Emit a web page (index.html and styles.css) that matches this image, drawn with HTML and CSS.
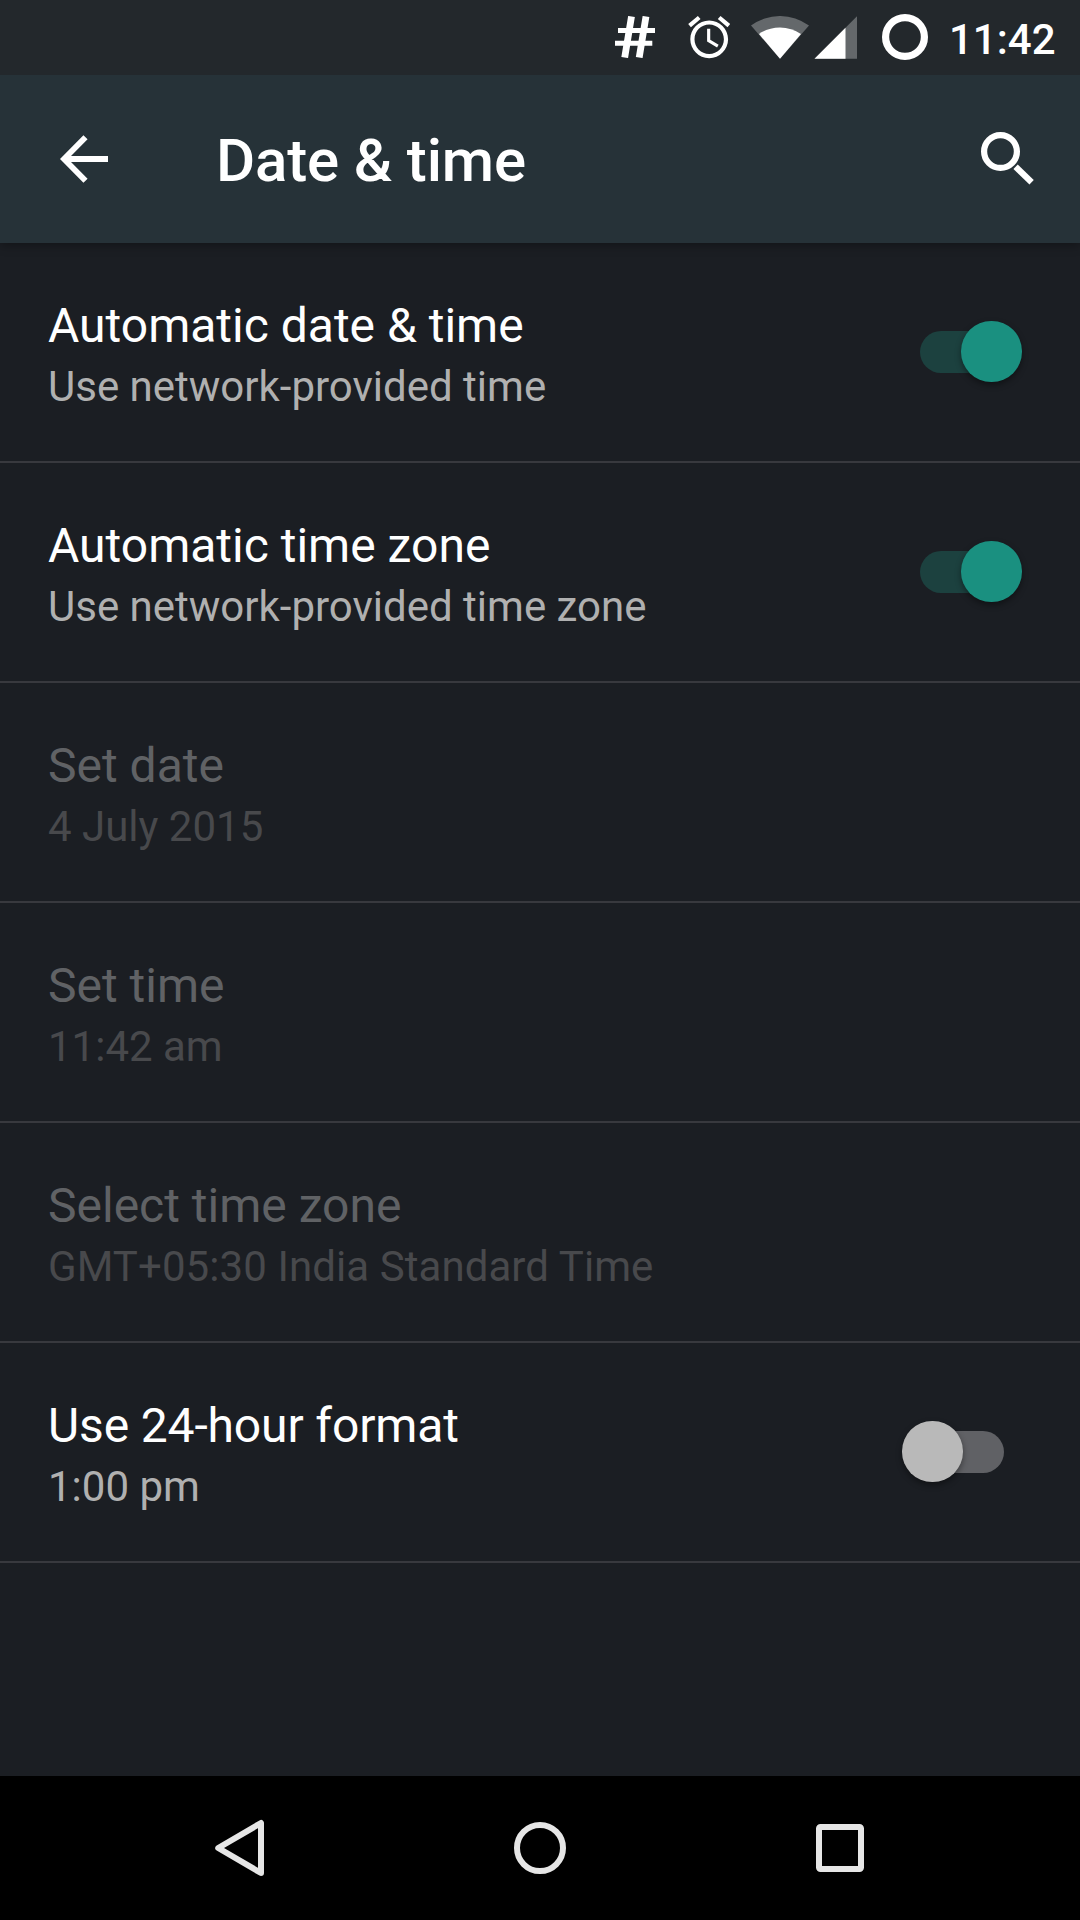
FILE: index.html
```html
<!DOCTYPE html>
<html lang="en">
<head>
<meta charset="utf-8">
<title>Date &amp; time</title>
<link rel="stylesheet" href="styles.css">
</head>
<body>
<div class="screen">
  <div class="status-bar">
    <svg class="status-icon root-icon" viewBox="0 0 40 42" width="40" height="42"><path d="M16.5 0.5L9.7 41.5M31 0.5L24.2 41.5" stroke-width="6.8"/><path d="M3 14.4H40M0 27.3H37.3" stroke-width="5"/></svg>
    <svg class="status-icon alarm-icon" viewBox="0 0 24 24" width="50.4" height="50.4"><path class="solid" d="M22 5.72l-4.6-3.86-1.29 1.53 4.6 3.86L22 5.72zM7.88 3.39L6.6 1.86 2 5.71l1.29 1.53 4.59-3.85zM12.5 8H11v6l4.75 2.85.75-1.23-4-2.37V8zM12 4c-4.97 0-9 4.03-9 9s4.02 9 9 9c4.97 0 9-4.03 9-9s-4.03-9-9-9zm0 16c-3.87 0-7-3.13-7-7s3.13-7 7-7 7 3.13 7 7-3.13 7-7 7z"/></svg>
    <svg class="status-icon wifi-icon" viewBox="0 0 58 43" width="58" height="43"><path class="faint" d="M0 9.5A49 49 0 0 1 58 9.5L29 42.7Z"/><path class="solid" d="M8 18A37 37 0 0 1 50 18L29 42.7Z"/></svg>
    <svg class="status-icon signal-icon" viewBox="0 0 43 43" width="43" height="43"><path class="faint" d="M0.5 42.7L43 0.3V42.7Z"/><path class="solid" d="M0.5 42.7L31.5 11.7V42.7Z"/></svg>
    <svg class="status-icon battery-icon" viewBox="0 0 46 46" width="46" height="46"><circle cx="23" cy="23" r="19.4" stroke-width="7.2"/></svg>
    <span class="clock">11:42</span>
  </div>
  <header class="action-bar">
    <svg class="back" viewBox="0 0 48 48" width="48" height="48"><path d="M48 24H5M25.5 2.2L4 24L25.5 45.8" stroke-width="5.8"/></svg>
    <h1 class="title">Date &amp; time</h1>
    <svg class="search" viewBox="0 0 54 54" width="54" height="54"><circle cx="19.5" cy="19.5" r="16.4" stroke-width="6.2"/><path d="M34.6 34.8L50.6 50.2" stroke-width="6.2"/></svg>
  </header>
  <main class="list">
    <div class="row">
      <div class="text"><div class="name">Automatic date &amp; time</div><div class="summary">Use network-provided time</div></div>
      <div class="switch on"><div class="thumb"></div></div>
    </div>
    <div class="row">
      <div class="text"><div class="name">Automatic time zone</div><div class="summary">Use network-provided time zone</div></div>
      <div class="switch on"><div class="thumb"></div></div>
    </div>
    <div class="row disabled">
      <div class="text"><div class="name">Set date</div><div class="summary">4 July 2015</div></div>
    </div>
    <div class="row disabled">
      <div class="text"><div class="name">Set time</div><div class="summary">11:42 am</div></div>
    </div>
    <div class="row disabled">
      <div class="text"><div class="name">Select time zone</div><div class="summary loose">GMT+05:30 India Standard Time</div></div>
    </div>
    <div class="row">
      <div class="text"><div class="name tight">Use 24-hour format</div><div class="summary">1:00 pm</div></div>
      <div class="switch"><div class="thumb"></div></div>
    </div>
  </main>
  <nav class="nav-bar">
    <svg viewBox="0 0 60 60" width="60" height="60"><path d="M51 5V55L8.2 30Z" stroke-width="6" stroke-linejoin="round"/></svg>
    <svg viewBox="0 0 60 60" width="60" height="60"><circle cx="30" cy="30" r="23" stroke-width="6"/></svg>
    <svg viewBox="0 0 60 60" width="60" height="60"><rect x="9" y="9" width="42" height="42" rx="1.5" stroke-width="6"/></svg>
  </nav>
</div>
</body>
</html>
```
FILE: styles.css
```css
* { box-sizing: border-box; }
body {
  margin: 0;
  background: #1b1e23;
  font-family: Roboto, sans-serif;
  color: #fff;
}
svg {
  display: block;
  flex: none;
  fill: none;
  stroke: #fff;
}
.screen {
  display: flex;
  flex-direction: column;
  width: 1080px;
  height: 1920px;
  overflow: hidden;
}
.status-bar {
  display: flex;
  align-items: flex-start;
  height: 75px;
  padding-left: 615px;
  background: #23282c;
  position: relative;
  z-index: 2;
}
.status-icon { margin-top: 16px; }
.alarm-icon { margin: 12px 0 0 29.2px; }
.wifi-icon { margin-left: 16.4px; }
.signal-icon { margin-left: 5px; }
.battery-icon { margin: 14px 0 0 25px; }
.solid { fill: #fff; stroke: none; }
.faint { fill: #64686b; stroke: none; }
.clock {
  margin: 15px 0 0 21px;
  font-size: 42px;
  line-height: 50px;
  font-weight: 500;
}
.action-bar {
  display: flex;
  align-items: flex-start;
  height: 168px;
  padding: 0 45px 0 60px;
  background: #263238;
  box-shadow: 0 2px 10px rgba(0, 0, 0, .35);
  position: relative;
  z-index: 1;
}
.back { margin-top: 60px; }
.title {
  flex: 1;
  margin: 51px 0 0 108px;
  font-size: 60px;
  line-height: 70px;
  font-weight: 500;
  letter-spacing: -.15px;
}
.search { margin-top: 57px; }
.list { flex: 1; }
.row {
  display: flex;
  align-items: center;
  justify-content: space-between;
  height: 220px;
  padding: 0 76px 0 48px;
  border-bottom: 2px solid #38393e;
}
.text { padding-top: 6px; }
.name { font-size: 48px; line-height: 64px; }
.name.tight { letter-spacing: -.13px; }
.summary { font-size: 42px; line-height: 58px; color: #b0b0b0; }
.summary.loose { letter-spacing: .08px; }
.disabled .name { color: #606265; }
.disabled .summary { color: #48494c; }
.switch {
  position: relative;
  width: 84px;
  height: 42px;
  border-radius: 21px;
  background: #606165;
}
.thumb {
  position: absolute;
  left: -17.7px;
  top: -9.7px;
  width: 60.4px;
  height: 60.4px;
  border-radius: 50%;
  background: #b9b9b9;
  box-shadow: 0 3px 6px rgba(0, 0, 0, .4);
}
.on { background: #1c413f; }
.on .thumb { left: 41.4px; background: #1a9080; }
.nav-bar {
  display: flex;
  justify-content: center;
  align-items: center;
  gap: 240px;
  height: 144px;
  background: #000;
}
.nav-bar svg { stroke: #e6e6e6; }
```
